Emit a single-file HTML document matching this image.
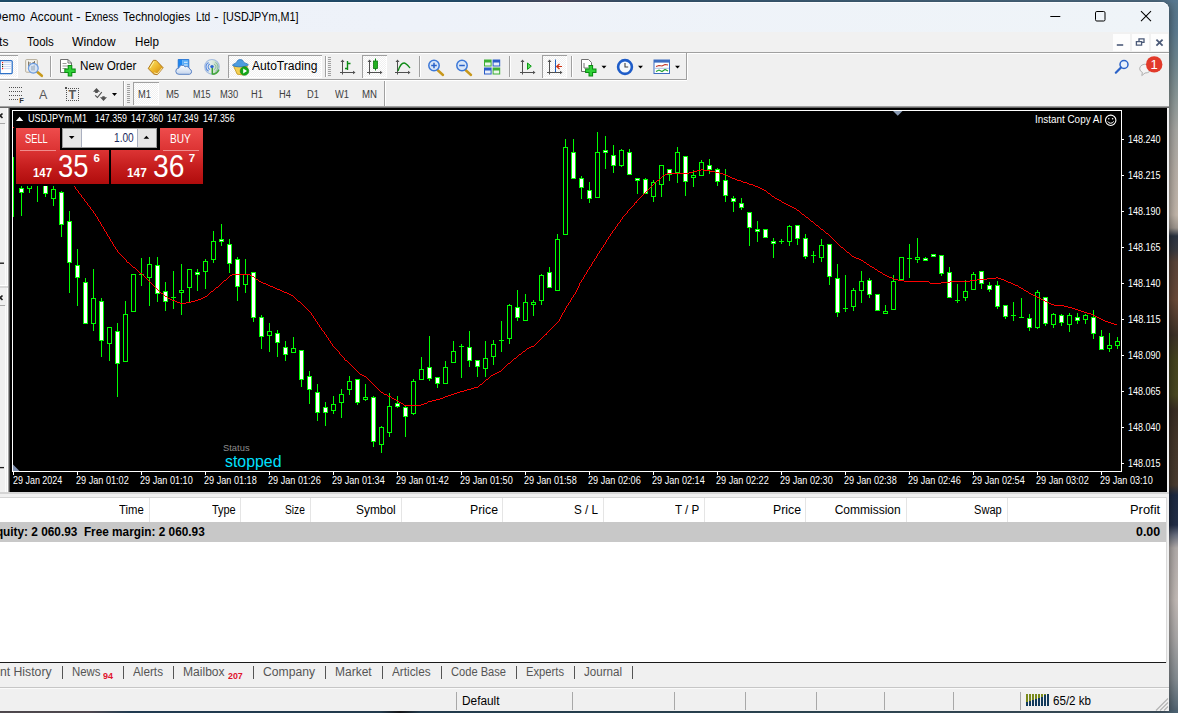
<!DOCTYPE html>
<html><head><meta charset="utf-8"><title>USDJPYm,M1</title>
<style>
html,body{margin:0;padding:0;}
body{width:1178px;height:713px;overflow:hidden;position:relative;font-family:"Liberation Sans",sans-serif;
background:linear-gradient(180deg,#58778c 0px,#5c7b90 30px,#6e8690 60px,#8a9898 95px,#a8a8a4 130px,#b8b0a8 170px,#c4b8ac 215px,#a09890 228px,#2c3442 236px,#3a3a40 250px,#5a4438 262px,#6a4a38 300px,#3e3228 335px,#46441f 360px,#4a4822 395px,#3a2e24 410px,#44362a 440px,#4a3c30 485px,#1e2a42 495px,#232f48 525px,#6a7080 535px,#b4aeac 548px,#c4bcb8 600px,#aaa8a8 640px,#848c92 680px,#5e6e7a 705px,#4e5e6c 713px);}
.r{position:absolute;}
.t{position:absolute;white-space:pre;transform-origin:0 50%;}
svg{position:absolute;overflow:visible;}
</style></head><body>
<div class="r" style="left:0;top:0;width:1178px;height:3px;background:linear-gradient(90deg,#235b7f 0,#2a5a7c 480px,#5c5870 560px,#3a607e 640px,#4a6c86 900px,#587890 1178px);"></div>
<div class="r" style="left:0;top:710px;width:1178px;height:3px;background:linear-gradient(90deg,#6a6268 0,#68606a 90px,#2c506c 130px,#2e5068 380px,#1c1c20 400px,#2e5068 420px,#3a5a6a 800px,#4e6474 1178px);"></div>
<div class="r" style="left:-30px;top:2px;width:1199px;height:709px;background:#f0f0f0;border-radius:8px 8px 0 0;box-shadow:0 1px 10px 1px rgba(0,0,0,.45);"></div>
<div class="r" style="left:0px;top:2px;width:1169px;height:29.5px;background:linear-gradient(90deg,#edf1f8 0,#eef2f9 400px,#eff4f8 100%);border-radius:0 8px 0 0;box-shadow:inset 0 1px 0 #fbfcfe;"></div>
<span class="t " style="left:-6.91px;top:8.80px;font-size:12px;line-height:16px;color:#000;">Demo</span>
<span class="t " style="left:29.60px;top:8.80px;font-size:12px;line-height:16px;color:#000;transform:scaleX(0.9779);">Account</span>
<span class="t " style="left:76.20px;top:8.80px;font-size:12px;line-height:16px;color:#000;transform:scaleX(1.1510);">-</span>
<span class="t " style="left:84.90px;top:8.80px;font-size:12px;line-height:16px;color:#000;transform:scaleX(0.8462);">Exness</span>
<span class="t " style="left:122.90px;top:8.80px;font-size:12px;line-height:16px;color:#000;transform:scaleX(0.9593);">Technologies</span>
<span class="t " style="left:195.50px;top:8.80px;font-size:12px;line-height:16px;color:#000;transform:scaleX(0.8572);">Ltd</span>
<span class="t " style="left:214.40px;top:8.80px;font-size:12px;line-height:16px;color:#000;transform:scaleX(1.1510);">-</span>
<span class="t " style="left:223.40px;top:8.80px;font-size:12px;line-height:16px;color:#000;transform:scaleX(0.8975);">[USDJPYm,M1]</span>
<svg width="1178" height="40" style="left:0;top:0"><g stroke="#000" stroke-width="1" fill="none"><path d="M1050.3 16.5H1060.3"/><rect x="1095.5" y="11.5" width="9.5" height="9.5" rx="1.3"/><path d="M1141 11.2L1151 21.2M1151 11.2L1141 21.2" stroke-width="1.05"/></g></svg>
<div class="r" style="left:0px;top:31.5px;width:1169px;height:20.5px;background:#f1f1f1;"></div>
<span class="t " style="left:-26.94px;top:33.50px;font-size:12px;line-height:16px;color:#000;">Charts</span>
<span class="t " style="left:27.20px;top:33.50px;font-size:12px;line-height:16px;color:#000;transform:scaleX(0.9567);">Tools</span>
<span class="t " style="left:72.40px;top:33.50px;font-size:12px;line-height:16px;color:#000;transform:scaleX(1.0192);">Window</span>
<span class="t " style="left:134.50px;top:33.50px;font-size:12px;line-height:16px;color:#000;transform:scaleX(0.9684);">Help</span>
<div class="r" style="left:1113px;top:34px;width:16.5px;height:16.5px;background:#fdfdfd;"></div>
<div class="r" style="left:1132px;top:34px;width:16.5px;height:16.5px;background:#fdfdfd;"></div>
<div class="r" style="left:1151px;top:34px;width:16.5px;height:16.5px;background:#fdfdfd;"></div>
<svg width="1178" height="60" style="left:0;top:0"><g stroke="#4b5a78" fill="none" stroke-width="1.6"><path d="M1116.8 45H1123.2"/><path d="M1136.4 41.6h5.2v3.6h-5.2zM1139 41.4v-2.6h5v3.6h-2.4" stroke-width="1.3"/><path d="M1156.4 39.6l6.2 6M1162.6 39.6l-6.2 6" stroke-width="1.8"/></g></svg>
<div class="r" style="left:0px;top:52px;width:1169px;height:1px;background:#a0a0a0;"></div>
<div class="r" style="left:0px;top:53px;width:1169px;height:1px;background:#ffffff;"></div>
<div class="r" style="left:0px;top:79px;width:687px;height:1px;background:#a0a0a0;"></div>
<div class="r" style="left:0px;top:80px;width:687px;height:1px;background:#ffffff;"></div>
<div class="r" style="left:686px;top:53px;width:1px;height:27px;background:#a0a0a0;"></div>
<div class="r" style="left:687px;top:53px;width:1px;height:27px;background:#ffffff;"></div>
<div class="r" style="left:384px;top:81px;width:1px;height:25px;background:#a0a0a0;"></div>
<div class="r" style="left:385px;top:81px;width:1px;height:25px;background:#ffffff;"></div>
<div class="r" style="left:0px;top:55px;width:18px;height:22.5px;background:repeating-conic-gradient(#ffffff 0 25%,#f0f0f0 0 50%) 0 0/2px 2px;box-shadow:inset 0 1px 0 #a0a0a0, inset -1px -1px 0 #ffffff;"></div>
<div class="r" style="left:228px;top:55px;width:94px;height:22.5px;background:repeating-conic-gradient(#ffffff 0 25%,#f0f0f0 0 50%) 0 0/2px 2px;box-shadow:inset 1px 1px 0 #a0a0a0, inset -1px -1px 0 #ffffff;"></div>
<div class="r" style="left:362px;top:55px;width:25px;height:22.5px;background:repeating-conic-gradient(#ffffff 0 25%,#f0f0f0 0 50%) 0 0/2px 2px;box-shadow:inset 1px 1px 0 #a0a0a0, inset -1px -1px 0 #ffffff;"></div>
<div class="r" style="left:542px;top:55px;width:25px;height:22.5px;background:repeating-conic-gradient(#ffffff 0 25%,#f0f0f0 0 50%) 0 0/2px 2px;box-shadow:inset 1px 1px 0 #a0a0a0, inset -1px -1px 0 #ffffff;"></div>
<div class="r" style="left:133px;top:82px;width:25.5px;height:22.5px;background:repeating-conic-gradient(#ffffff 0 25%,#f0f0f0 0 50%) 0 0/2px 2px;box-shadow:inset 1px 1px 0 #a0a0a0, inset -1px -1px 0 #ffffff;"></div>
<div class="r" style="left:50px;top:56px;width:1px;height:21px;background:#a0a0a0;"></div>
<div class="r" style="left:51px;top:56px;width:1px;height:21px;background:#ffffff;"></div>
<div class="r" style="left:325px;top:56px;width:1px;height:21px;background:#a0a0a0;"></div>
<div class="r" style="left:326px;top:56px;width:1px;height:21px;background:#ffffff;"></div>
<div class="r" style="left:419px;top:56px;width:1px;height:21px;background:#a0a0a0;"></div>
<div class="r" style="left:420px;top:56px;width:1px;height:21px;background:#ffffff;"></div>
<div class="r" style="left:509px;top:56px;width:1px;height:21px;background:#a0a0a0;"></div>
<div class="r" style="left:510px;top:56px;width:1px;height:21px;background:#ffffff;"></div>
<div class="r" style="left:571px;top:56px;width:1px;height:21px;background:#a0a0a0;"></div>
<div class="r" style="left:572px;top:56px;width:1px;height:21px;background:#ffffff;"></div>
<div class="r" style="left:123px;top:81px;width:1px;height:25px;background:#a0a0a0;"></div>
<div class="r" style="left:124px;top:81px;width:1px;height:25px;background:#ffffff;"></div>
<div class="r" style="left:328px;top:57px;width:3px;height:20px;background:repeating-linear-gradient(180deg,#a0a0a0 0,#a0a0a0 1px,#f0f0f0 1px,#f0f0f0 2px);"></div>
<div class="r" style="left:127px;top:84px;width:3px;height:20px;background:repeating-linear-gradient(180deg,#a0a0a0 0,#a0a0a0 1px,#f0f0f0 1px,#f0f0f0 2px);"></div>
<span class="t " style="left:79.50px;top:57.50px;font-size:12px;line-height:16px;color:#000;transform:scaleX(0.9739);">New Order</span>
<span class="t " style="left:252.00px;top:58.00px;font-size:12px;line-height:16px;color:#000;transform:scaleX(1.0072);">AutoTrading</span>
<svg width="1178" height="110" style="left:0;top:0"><rect x="-3" y="60.6" width="15.2" height="13" rx="1" fill="#fff" stroke="#2e72c8" stroke-width="1.3"/><rect x="-1" y="61" width="1.8" height="12.2" fill="#3c7cd0"/><g stroke="#c4d6f4" stroke-width="0.9"><path d="M4 62.6h7.4M4 64.6h7.4M4 66.6h7.4M4 68.6h7.4"/></g><g><rect x="2" y="62" width="1.2" height="1.2" fill="#f01818"/><rect x="2" y="64" width="1.2" height="1.2" fill="#203020"/><rect x="2" y="66" width="1.2" height="1.2" fill="#203020"/><rect x="2" y="68" width="1.2" height="1.2" fill="#f01818"/></g><rect x="25.7" y="59.6" width="11.6" height="12.6" rx=".8" fill="#f6f4ee" stroke="#b4ac98" stroke-width="1"/><path d="M28.5 61.5v6M28.5 63h2.5M34.5 61v6M32.5 62.500h2" stroke="#787060" stroke-width=".9" fill="none"/><path d="M37.4 72l4.400 3.800" stroke="#c89a1c" stroke-width="2.6" stroke-linecap="round"/><circle cx="33.3" cy="68.2" r="4.9" fill="#d4e2f4" fill-opacity=".9" stroke="#6c9ce0" stroke-width="1.2"/><path d="M32 66v4.400M34 65.600v5" stroke="#9cacbc" stroke-width="1.2"/><path d="M60.5 59.5h7.5l3.5 3.5v9.5h-11z" fill="#fff" stroke="#707070" stroke-width="1"/><path d="M68 59.5v3.5h3.5" fill="none" stroke="#707070" stroke-width="1"/><path d="M62.5 63.5h4M62.5 66h6M62.5 68.5h4" stroke="#909090" stroke-width="0.9"/><path d="M70 65v11.4M64.3 70.7h11.4" stroke="#0a8a12" stroke-width="4.6"/><path d="M70 66v9.4M65.3 70.7h9.4" stroke="#30d038" stroke-width="2.6"/><defs><linearGradient id="gb" x1="0" y1="0" x2="1" y2="1"><stop offset="0" stop-color="#fbe870"/><stop offset=".5" stop-color="#eeb82c"/><stop offset="1" stop-color="#c07c10"/></linearGradient><linearGradient id="gf" x1="0" y1="0" x2="0" y2="1"><stop offset="0" stop-color="#fff"/><stop offset="1" stop-color="#c4d4ec"/></linearGradient><linearGradient id="gs" x1="0" y1="0" x2="1" y2="0"><stop offset="0" stop-color="#e8f0fc"/><stop offset=".5" stop-color="#d0e4d8"/><stop offset="1" stop-color="#8cc87c"/></linearGradient></defs><path d="M148.2 68.6l5.2-8.3 2.8.1 7 7.4-6 6.9-3.4-.6z" fill="url(#gb)" stroke="#a86c10" stroke-width=".9" stroke-linejoin="round"/><path d="M154.2 72.8l3 1 5.2-6" fill="none" stroke="#fcefb4" stroke-width="1"/><path d="M150 68l4-6.4" fill="none" stroke="#fdf4a8" stroke-width="1"/><path d="M178.2 59.5h4.3v9h-4.3z" fill="#1c86f0"/><path d="M182.5 59.5h6.3v9.5h-6.3z" fill="#56acf8"/><path d="M178.2 59.5h10.6v9.5h-10.6z" fill="none" stroke="#1a6cd0" stroke-width=".8"/><path d="M184 62.3h3.6M184 65h3.6" stroke="#eaf4ff" stroke-width="1.1"/><path d="M179 74.3a3.1 3.1 0 0 1-.2-6.2 3.5 3.5 0 0 1 6.3-1.3 3.3 3.3 0 0 1 4.6 2.3 2.7 2.7 0 0 1-.2 5.2z" fill="url(#gf)" stroke="#5a82c4" stroke-width="1"/><circle cx="212" cy="66.8" r="7.3" fill="url(#gs)" fill-opacity=".55" stroke="#a4bce0" stroke-width="1.1"/><path d="M208.6 71.2a5 5 0 0 1 0-8.8M210 69.6a3 3 0 0 1 0-5.6" fill="none" stroke="#5c8ce0" stroke-width="1.1"/><path d="M215.4 71.2a5 5 0 0 0 0-8.8M214 69.6a3 3 0 0 0 0-5.6" fill="none" stroke="#8cb8a8" stroke-width="1"/><circle cx="212" cy="66.6" r="1.7" fill="#2a62d0"/><path d="M212.3 68v6.4" stroke="#38a030" stroke-width="1.5"/><path d="M212.3 74.2a7.4 7.4 0 0 0 6.6-4.6" fill="none" stroke="#48a840" stroke-width="1.6"/><path d="M233.6 66.2l3.6 8 6.4.8 3.8-8.6z" fill="#f4d054" stroke="#c09418" stroke-width=".8"/><path d="M232.4 65.2c2-2.2 4-1.6 4.600-3.800 1-2.400 5.400-2.400 6.400 0 .6 2.200 3.400 1.400 5 3.400-3.200 2.600-12.400 2.800-16 .4z" fill="#4c9ce0" stroke="#2c74b8" stroke-width=".8"/><circle cx="244.5" cy="71" r="4.3" fill="#14a818" stroke="#0c8010" stroke-width=".6"/><path d="M243.2 68.6v4.8l3.800-2.400z" fill="#fff"/><path d="M342.5 60v14.5M340 72.5h14" stroke="#505050" stroke-width="1" fill="none"/><path d="M340.5 62l2-2.5 2 2.5zM353 70.8l2.5 1.7-2.5 1.7z" fill="#505050"/><path d="M347.5 61v9M347.5 63.5h3M345 68.5h2.5" stroke="#0c8a14" stroke-width="1.4" fill="none"/><path d="M369.5 60v14.5M367 72.5h14" stroke="#505050" stroke-width="1" fill="none"/><path d="M367.5 62l2-2.5 2 2.5zM380 70.8l2.5 1.7-2.5 1.7z" fill="#505050"/><path d="M375.5 58.5v12" stroke="#0c8a14" stroke-width="1"/><rect x="373.5" y="61" width="4" height="7.5" fill="#22b020" stroke="#0c7a10" stroke-width=".8"/><path d="M397.5 60v14.5M395 72.5h14" stroke="#505050" stroke-width="1" fill="none"/><path d="M395.5 62l2-2.5 2 2.5zM408 70.8l2.5 1.7-2.5 1.7z" fill="#505050"/><path d="M398 71c2-6 4-8 6-8s3.5 2 6 5" stroke="#0c8a14" stroke-width="1.3" fill="none"/><path d="M437.5 70.0l5.5 5" stroke="#c8981c" stroke-width="2.4" stroke-linecap="round"/><circle cx="434" cy="65.5" r="5.2" fill="#d8e6f8" stroke="#3c78d8" stroke-width="1.5"/><path d="M431.2 65.5h5.6" stroke="#2a62c8" stroke-width="1.5"/><path d="M434 62.7v5.6" stroke="#2a62c8" stroke-width="1.5"/><path d="M465.5 70.0l5.5 5" stroke="#c8981c" stroke-width="2.4" stroke-linecap="round"/><circle cx="462" cy="65.5" r="5.2" fill="#d8e6f8" stroke="#3c78d8" stroke-width="1.5"/><path d="M459.2 65.5h5.6" stroke="#2a62c8" stroke-width="1.5"/><rect x="484" y="59.5" width="7.6" height="7" fill="#3cb034"/><rect x="492.6" y="59.5" width="7.6" height="7" fill="#2a5cc8"/><rect x="484" y="67.5" width="7.6" height="7" fill="#2a5cc8"/><rect x="492.6" y="67.5" width="7.6" height="7" fill="#3cb034"/><g fill="#fff" fill-opacity=".9"><rect x="485" y="62.5" width="5.6" height="3"/><rect x="493.6" y="62.5" width="5.6" height="3"/><rect x="485" y="70.5" width="5.6" height="3"/><rect x="493.6" y="70.5" width="5.6" height="3"/></g><path d="M522.5 60v14.5M520 72.5h14" stroke="#505050" stroke-width="1" fill="none"/><path d="M520.5 62l2-2.5 2 2.5zM533 70.8l2.5 1.7-2.5 1.7z" fill="#505050"/><path d="M527.5 63v6.4l3.8-3.2z" fill="#60e060" stroke="#0c9a14" stroke-width="1"/><path d="M549.5 60v14.5M547 72.5h14" stroke="#505050" stroke-width="1" fill="none"/><path d="M547.5 62l2-2.5 2 2.5zM560 70.8l2.5 1.7-2.5 1.7z" fill="#505050"/><path d="M555.5 59.5v12.5" stroke="#2060c0" stroke-width="1"/><path d="M562 66.5h-5M559.5 64l-2.8 2.5 2.8 2.5" stroke="#d03010" stroke-width="1.2" fill="none"/><path d="M581.5 59.5h7l3 3v9h-10z" fill="#fff" stroke="#707070" stroke-width="1"/><path d="M584 63v5h4" stroke="#707070" stroke-width="1" fill="none"/><path d="M590.8 65v11.4M585.1 70.7h11.4" stroke="#0a8a12" stroke-width="4.6"/><path d="M590.8 66v9.4M586.1 70.7h9.4" stroke="#30d038" stroke-width="2.6"/><path d="M601.5 65.8h5l-2.5 2.8z" fill="#000"/><path d="M638.0 65.8h5l-2.5 2.8z" fill="#000"/><path d="M675.0 65.8h5l-2.5 2.8z" fill="#000"/><circle cx="625" cy="67" r="6.9" fill="#f4f8fc" stroke="#1e5cc8" stroke-width="2.6"/><path d="M625 63v4h3.2" stroke="#404040" stroke-width="1.1" fill="none"/><rect x="654" y="60" width="15.5" height="13.5" fill="#fff" stroke="#3c6cc0" stroke-width="1"/><rect x="654" y="60" width="15.5" height="2.6" fill="#3c6cc0"/><path d="M656 66.5l3-1 3 .5 3-1.5 3 .5" stroke="#c03020" stroke-width="1.1" fill="none"/><path d="M656 71.5l3-1.5 3 1.5 3-2 3 1.5" stroke="#20a030" stroke-width="1.1" fill="none"/><path d="M654.5 68.3h14.5" stroke="#9ab0d8" stroke-width=".8"/><circle cx="1124" cy="64.5" r="4" fill="#e8f0fc" stroke="#2a62c8" stroke-width="1.5"/><path d="M1121 67.5l-5.2 5.2" stroke="#2a62c8" stroke-width="2.2" stroke-linecap="round"/><path d="M1140 70a5.6 4.4 0 1 1 5 3l-3.2 2.6.6-3.2a5 4 0 0 1-2.4-2.4z" fill="#f4f4f4" stroke="#b0b0b0" stroke-width="1"/><circle cx="1154.2" cy="64.4" r="8.2" fill="#e23a2a"/><g stroke="#505050" stroke-width="1" stroke-dasharray="1 1"><path d="M9 87.5h14M9 91.5h14M9 95.5h14M9 99.5h9"/></g><g fill="#505050" shape-rendering="crispEdges"><rect x="66" y="88" width="1" height="1"/><rect x="66" y="100" width="1" height="1"/><rect x="68" y="88" width="1" height="1"/><rect x="68" y="100" width="1" height="1"/><rect x="70" y="88" width="1" height="1"/><rect x="70" y="100" width="1" height="1"/><rect x="72" y="88" width="1" height="1"/><rect x="72" y="100" width="1" height="1"/><rect x="74" y="88" width="1" height="1"/><rect x="74" y="100" width="1" height="1"/><rect x="76" y="88" width="1" height="1"/><rect x="76" y="100" width="1" height="1"/><rect x="78" y="88" width="1" height="1"/><rect x="78" y="100" width="1" height="1"/><rect x="66" y="90" width="1" height="1"/><rect x="78" y="90" width="1" height="1"/><rect x="66" y="92" width="1" height="1"/><rect x="78" y="92" width="1" height="1"/><rect x="66" y="94" width="1" height="1"/><rect x="78" y="94" width="1" height="1"/><rect x="66" y="96" width="1" height="1"/><rect x="78" y="96" width="1" height="1"/><rect x="66" y="98" width="1" height="1"/><rect x="78" y="98" width="1" height="1"/><rect x="65" y="87" width="2" height="2"/></g><path d="M96.5 88l3.5 3.8h-2.2v1.2h-2.6v-1.2h-2.2z" fill="#505050"/><path d="M103.5 100.9l3.5-3.7h-2.3v-1h-2.4v1h-2.3z" fill="#505050"/><path d="M95.2 95.3l2.2 2.2 4.4-5.3" stroke="#505050" stroke-width="1.1" fill="none"/><path d="M112.0 93.1h5l-2.5 2.8z" fill="#000"/></svg>
<span class="t " style="left:1150.60px;top:55.70px;font-size:13px;line-height:17px;color:#fff;">1</span>
<span class="t " style="left:19.20px;top:95.60px;font-size:7.5px;line-height:10px;color:#303030;font-weight:bold;">F</span>
<span class="t " style="left:39.30px;top:85.60px;font-size:13.5px;line-height:18px;color:#585858;transform:scaleX(0.9217);">A</span>
<span class="t " style="left:68.40px;top:86.60px;font-size:12.5px;line-height:16px;color:#585858;font-weight:bold;">T</span>
<span class="t " style="left:138.30px;top:88.00px;font-size:10px;line-height:13px;color:#404040;transform:scaleX(0.9358);">M1</span>
<span class="t " style="left:166.30px;top:88.00px;font-size:10px;line-height:13px;color:#404040;transform:scaleX(0.9430);">M5</span>
<span class="t " style="left:192.60px;top:88.00px;font-size:10px;line-height:13px;color:#404040;transform:scaleX(0.8944);">M15</span>
<span class="t " style="left:220.30px;top:88.00px;font-size:10px;line-height:13px;color:#404040;transform:scaleX(0.9355);">M30</span>
<span class="t " style="left:251.20px;top:88.00px;font-size:10px;line-height:13px;color:#404040;transform:scaleX(0.9231);">H1</span>
<span class="t " style="left:278.90px;top:88.00px;font-size:10px;line-height:13px;color:#404040;transform:scaleX(0.9309);">H4</span>
<span class="t " style="left:307.20px;top:88.00px;font-size:10px;line-height:13px;color:#404040;transform:scaleX(0.9309);">D1</span>
<span class="t " style="left:334.50px;top:88.00px;font-size:10px;line-height:13px;color:#404040;transform:scaleX(0.9333);">W1</span>
<span class="t " style="left:361.50px;top:88.00px;font-size:10px;line-height:13px;color:#404040;transform:scaleX(0.9645);">MN</span>
<div class="r" style="left:0px;top:106px;width:1169px;height:1px;background:#a0a0a0;"></div>
<div class="r" style="left:0px;top:107px;width:1169px;height:1px;background:#696969;"></div>
<div class="r" style="left:0px;top:108px;width:10px;height:384px;background:#f0f0f0;"></div>
<div class="r" style="left:7px;top:108px;width:1px;height:384px;background:#ffffff;"></div>
<div class="r" style="left:8px;top:108px;width:1px;height:384px;background:#a0a0a0;"></div>
<div class="r" style="left:9px;top:108px;width:1px;height:384px;background:#505050;"></div>
<div class="r" style="left:10px;top:108px;width:1158px;height:384px;background:#000000;"></div>
<div class="r" style="left:1167px;top:108px;width:2px;height:384px;background:#f0f0f0;"></div>
<svg width="12" height="400" style="left:0;top:100"><g stroke="#202020" stroke-width="1.6" fill="none"><path d="M-2 13.5l4.5 4.5M2.5 13.5l-4.5 4.5"/><path d="M-2 195.5l4.5 4.5M2.5 195.5l-4.5 4.5"/></g><path d="M0 185.5h7" stroke="#ffffff"/><path d="M0 186.5h8M0 187.5h8" stroke="#d8d8d8"/><path d="M0 163.2h4" stroke="#202020" stroke-width="1.4"/><path d="M0 367.6h4" stroke="#202020" stroke-width="1.3"/><path d="M0 23.5h5M0 205.5h5" stroke="#a8a8a8"/><path d="M5.5 24v161M5.5 206v186" stroke="#fbfbfb"/></svg>
<svg width="1178" height="713" style="left:0;top:0" shape-rendering="crispEdges"><g fill="#ffffff"><rect x="12" y="110" width="1110" height="1"/><rect x="12" y="110" width="1" height="362"/><rect x="1121" y="110" width="1" height="362"/><rect x="12" y="471" width="1110" height="1"/></g><rect x="13" y="157" width="1" height="60" fill="#00ff00"/><g fill="#00ff00"><rect x="21" y="186" width="1" height="30"/><rect x="29" y="180" width="1" height="13"/><rect x="37" y="180" width="1" height="22"/><rect x="45" y="180" width="1" height="17"/><rect x="53" y="186" width="1" height="20"/><rect x="61" y="191" width="1" height="46"/><rect x="69" y="211" width="1" height="82"/><rect x="77" y="249" width="1" height="57"/><rect x="85" y="278" width="1" height="46"/><rect x="93" y="269" width="1" height="62"/><rect x="101" y="298" width="1" height="59"/><rect x="109" y="327" width="1" height="34"/><rect x="117" y="323" width="1" height="74"/><rect x="125" y="301" width="1" height="61"/><rect x="133" y="274" width="1" height="38"/><rect x="141" y="258" width="1" height="28"/><rect x="149" y="257" width="1" height="49"/><rect x="157" y="257" width="1" height="45"/><rect x="165" y="282" width="1" height="29"/><rect x="173" y="271" width="1" height="38"/><rect x="181" y="264" width="1" height="51"/><rect x="189" y="269" width="1" height="33"/><rect x="197" y="269" width="1" height="22"/><rect x="205" y="259" width="1" height="30"/><rect x="213" y="231" width="1" height="32"/><rect x="221" y="224" width="1" height="22"/><rect x="229" y="239" width="1" height="34"/><rect x="237" y="257" width="1" height="44"/><rect x="245" y="259" width="1" height="34"/><rect x="253" y="272" width="1" height="50"/><rect x="261" y="315" width="1" height="34"/><rect x="269" y="323" width="1" height="29"/><rect x="277" y="330" width="1" height="27"/><rect x="285" y="341" width="1" height="20"/><rect x="293" y="337" width="1" height="16"/><rect x="301" y="350" width="1" height="37"/><rect x="309" y="371" width="1" height="33"/><rect x="317" y="384" width="1" height="37"/><rect x="325" y="402" width="1" height="24"/><rect x="333" y="396" width="1" height="18"/><rect x="341" y="389" width="1" height="29"/><rect x="349" y="376" width="1" height="19"/><rect x="357" y="379" width="1" height="26"/><rect x="365" y="384" width="1" height="17"/><rect x="373" y="396" width="1" height="51"/><rect x="381" y="426" width="1" height="27"/><rect x="389" y="393" width="1" height="44"/><rect x="397" y="396" width="1" height="12"/><rect x="405" y="405" width="1" height="32"/><rect x="413" y="379" width="1" height="36"/><rect x="421" y="357" width="1" height="23"/><rect x="429" y="336" width="1" height="45"/><rect x="437" y="377" width="1" height="11"/><rect x="445" y="361" width="1" height="23"/><rect x="453" y="341" width="1" height="22"/><rect x="461" y="344" width="1" height="34"/><rect x="469" y="331" width="1" height="36"/><rect x="477" y="360" width="1" height="17"/><rect x="485" y="341" width="1" height="36"/><rect x="493" y="340" width="1" height="25"/><rect x="501" y="321" width="1" height="31"/><rect x="509" y="304" width="1" height="40"/><rect x="517" y="290" width="1" height="31"/><rect x="525" y="294" width="1" height="27"/><rect x="533" y="300" width="1" height="16"/><rect x="541" y="274" width="1" height="31"/><rect x="549" y="267" width="1" height="21"/><rect x="557" y="234" width="1" height="57"/><rect x="565" y="139" width="1" height="96"/><rect x="573" y="139" width="1" height="40"/><rect x="581" y="176" width="1" height="23"/><rect x="589" y="182" width="1" height="21"/><rect x="597" y="132" width="1" height="66"/><rect x="605" y="136" width="1" height="33"/><rect x="613" y="145" width="1" height="28"/><rect x="621" y="149" width="1" height="18"/><rect x="629" y="149" width="1" height="26"/><rect x="637" y="178" width="1" height="16"/><rect x="645" y="178" width="1" height="16"/><rect x="653" y="180" width="1" height="22"/><rect x="661" y="165" width="1" height="32"/><rect x="669" y="169" width="1" height="12"/><rect x="677" y="147" width="1" height="36"/><rect x="685" y="156" width="1" height="40"/><rect x="693" y="170" width="1" height="17"/><rect x="701" y="160" width="1" height="16"/><rect x="709" y="159" width="1" height="15"/><rect x="717" y="168" width="1" height="18"/><rect x="725" y="169" width="1" height="33"/><rect x="733" y="196" width="1" height="16"/><rect x="741" y="198" width="1" height="12"/><rect x="749" y="212" width="1" height="34"/><rect x="757" y="221" width="1" height="21"/><rect x="765" y="229" width="1" height="9"/><rect x="773" y="238" width="1" height="20"/><rect x="781" y="239" width="1" height="5"/><rect x="789" y="225" width="1" height="21"/><rect x="797" y="225" width="1" height="20"/><rect x="805" y="234" width="1" height="25"/><rect x="813" y="251" width="1" height="12"/><rect x="821" y="239" width="1" height="23"/><rect x="829" y="244" width="1" height="41"/><rect x="837" y="264" width="1" height="53"/><rect x="845" y="275" width="1" height="37"/><rect x="853" y="288" width="1" height="23"/><rect x="861" y="271" width="1" height="32"/><rect x="869" y="278" width="1" height="20"/><rect x="877" y="294" width="1" height="17"/><rect x="885" y="305" width="1" height="8"/><rect x="893" y="275" width="1" height="35"/><rect x="901" y="257" width="1" height="24"/><rect x="909" y="244" width="1" height="34"/><rect x="917" y="238" width="1" height="25"/><rect x="925" y="257" width="1" height="3"/><rect x="933" y="254" width="1" height="3"/><rect x="941" y="255" width="1" height="21"/><rect x="949" y="267" width="1" height="31"/><rect x="957" y="284" width="1" height="19"/><rect x="965" y="280" width="1" height="21"/><rect x="973" y="272" width="1" height="18"/><rect x="981" y="271" width="1" height="18"/><rect x="989" y="282" width="1" height="10"/><rect x="997" y="281" width="1" height="28"/><rect x="1005" y="305" width="1" height="14"/><rect x="1013" y="302" width="1" height="19"/><rect x="1021" y="298" width="1" height="20"/><rect x="1029" y="314" width="1" height="17"/><rect x="1037" y="290" width="1" height="39"/><rect x="1045" y="297" width="1" height="29"/><rect x="1053" y="313" width="1" height="15"/><rect x="1061" y="314" width="1" height="12"/><rect x="1069" y="313" width="1" height="19"/><rect x="1077" y="313" width="1" height="11"/><rect x="1085" y="314" width="1" height="10"/><rect x="1093" y="310" width="1" height="29"/><rect x="1101" y="330" width="1" height="20"/><rect x="1109" y="333" width="1" height="19"/><rect x="1117" y="337" width="1" height="12"/><rect x="19" y="188" width="5" height="5"/><rect x="27" y="180" width="5" height="9"/><rect x="43" y="180" width="5" height="14"/><rect x="51" y="189" width="5" height="10"/><rect x="59" y="192" width="5" height="33"/><rect x="67" y="221" width="5" height="42"/><rect x="75" y="265" width="5" height="13"/><rect x="83" y="282" width="5" height="42"/><rect x="91" y="298" width="5" height="26"/><rect x="99" y="301" width="5" height="40"/><rect x="107" y="327" width="5" height="17"/><rect x="115" y="331" width="5" height="33"/><rect x="123" y="314" width="5" height="48"/><rect x="131" y="274" width="5" height="38"/><rect x="139" y="274" width="5" height="1"/><rect x="147" y="264" width="5" height="14"/><rect x="155" y="265" width="5" height="29"/><rect x="163" y="291" width="5" height="11"/><rect x="171" y="297" width="5" height="1"/><rect x="179" y="290" width="5" height="3"/><rect x="187" y="269" width="5" height="19"/><rect x="195" y="272" width="5" height="3"/><rect x="203" y="261" width="5" height="11"/><rect x="211" y="241" width="5" height="19"/><rect x="219" y="239" width="5" height="3"/><rect x="227" y="244" width="5" height="20"/><rect x="235" y="259" width="5" height="28"/><rect x="243" y="274" width="5" height="11"/><rect x="251" y="272" width="5" height="46"/><rect x="259" y="317" width="5" height="20"/><rect x="267" y="331" width="5" height="5"/><rect x="275" y="333" width="5" height="10"/><rect x="283" y="347" width="5" height="8"/><rect x="291" y="348" width="5" height="5"/><rect x="299" y="350" width="5" height="30"/><rect x="307" y="376" width="5" height="14"/><rect x="315" y="392" width="5" height="21"/><rect x="323" y="407" width="5" height="6"/><rect x="331" y="404" width="5" height="7"/><rect x="339" y="394" width="5" height="9"/><rect x="347" y="381" width="5" height="9"/><rect x="355" y="379" width="5" height="24"/><rect x="363" y="397" width="5" height="3"/><rect x="371" y="397" width="5" height="45"/><rect x="379" y="427" width="5" height="18"/><rect x="387" y="406" width="5" height="27"/><rect x="395" y="403" width="5" height="4"/><rect x="403" y="407" width="5" height="10"/><rect x="411" y="381" width="5" height="33"/><rect x="419" y="369" width="5" height="11"/><rect x="427" y="367" width="5" height="12"/><rect x="435" y="377" width="5" height="7"/><rect x="443" y="367" width="5" height="17"/><rect x="451" y="351" width="5" height="12"/><rect x="459" y="346" width="5" height="1"/><rect x="467" y="347" width="5" height="14"/><rect x="475" y="360" width="5" height="7"/><rect x="483" y="358" width="5" height="11"/><rect x="491" y="344" width="5" height="13"/><rect x="499" y="340" width="5" height="1"/><rect x="507" y="305" width="5" height="34"/><rect x="515" y="307" width="5" height="11"/><rect x="523" y="302" width="5" height="19"/><rect x="531" y="302" width="5" height="3"/><rect x="539" y="275" width="5" height="26"/><rect x="547" y="272" width="5" height="16"/><rect x="555" y="239" width="5" height="52"/><rect x="563" y="147" width="5" height="88"/><rect x="571" y="152" width="5" height="27"/><rect x="579" y="178" width="5" height="10"/><rect x="587" y="190" width="5" height="9"/><rect x="595" y="152" width="5" height="46"/><rect x="603" y="150" width="5" height="3"/><rect x="611" y="155" width="5" height="11"/><rect x="619" y="150" width="5" height="16"/><rect x="627" y="152" width="5" height="23"/><rect x="635" y="178" width="5" height="3"/><rect x="643" y="179" width="5" height="15"/><rect x="651" y="182" width="5" height="15"/><rect x="659" y="165" width="5" height="20"/><rect x="667" y="169" width="5" height="6"/><rect x="675" y="152" width="5" height="21"/><rect x="683" y="156" width="5" height="26"/><rect x="691" y="175" width="5" height="3"/><rect x="699" y="162" width="5" height="14"/><rect x="707" y="165" width="5" height="5"/><rect x="715" y="169" width="5" height="13"/><rect x="723" y="180" width="5" height="16"/><rect x="731" y="198" width="5" height="4"/><rect x="739" y="203" width="5" height="5"/><rect x="747" y="212" width="5" height="16"/><rect x="755" y="229" width="5" height="3"/><rect x="763" y="229" width="5" height="9"/><rect x="771" y="241" width="5" height="3"/><rect x="779" y="241" width="5" height="1"/><rect x="787" y="226" width="5" height="16"/><rect x="795" y="225" width="5" height="14"/><rect x="803" y="238" width="5" height="19"/><rect x="811" y="255" width="5" height="1"/><rect x="819" y="245" width="5" height="13"/><rect x="827" y="244" width="5" height="33"/><rect x="835" y="278" width="5" height="35"/><rect x="843" y="308" width="5" height="1"/><rect x="851" y="290" width="5" height="17"/><rect x="859" y="281" width="5" height="10"/><rect x="867" y="280" width="5" height="15"/><rect x="875" y="294" width="5" height="17"/><rect x="883" y="311" width="5" height="3"/><rect x="891" y="281" width="5" height="29"/><rect x="899" y="257" width="5" height="23"/><rect x="907" y="258" width="5" height="1"/><rect x="915" y="257" width="5" height="3"/><rect x="923" y="258" width="5" height="3"/><rect x="931" y="254" width="5" height="3"/><rect x="939" y="255" width="5" height="19"/><rect x="947" y="272" width="5" height="26"/><rect x="955" y="300" width="5" height="1"/><rect x="963" y="291" width="5" height="7"/><rect x="971" y="274" width="5" height="16"/><rect x="979" y="271" width="5" height="13"/><rect x="987" y="285" width="5" height="5"/><rect x="995" y="285" width="5" height="22"/><rect x="1003" y="305" width="5" height="12"/><rect x="1011" y="315" width="5" height="1"/><rect x="1019" y="317" width="5" height="1"/><rect x="1027" y="318" width="5" height="10"/><rect x="1035" y="292" width="5" height="36"/><rect x="1043" y="297" width="5" height="27"/><rect x="1051" y="314" width="5" height="11"/><rect x="1059" y="315" width="5" height="8"/><rect x="1067" y="315" width="5" height="10"/><rect x="1075" y="317" width="5" height="4"/><rect x="1083" y="315" width="5" height="5"/><rect x="1091" y="317" width="5" height="17"/><rect x="1099" y="336" width="5" height="14"/><rect x="1107" y="345" width="5" height="4"/><rect x="1115" y="341" width="5" height="5"/></g><g fill="#ffffff"><rect x="20" y="189" width="3" height="3"/><rect x="44" y="181" width="3" height="12"/><rect x="60" y="193" width="3" height="31"/><rect x="68" y="222" width="3" height="40"/><rect x="76" y="266" width="3" height="11"/><rect x="84" y="283" width="3" height="40"/><rect x="100" y="302" width="3" height="38"/><rect x="116" y="332" width="3" height="31"/><rect x="156" y="266" width="3" height="27"/><rect x="164" y="292" width="3" height="9"/><rect x="196" y="273" width="3" height="1"/><rect x="220" y="240" width="3" height="1"/><rect x="228" y="245" width="3" height="18"/><rect x="236" y="260" width="3" height="26"/><rect x="252" y="273" width="3" height="44"/><rect x="260" y="318" width="3" height="18"/><rect x="276" y="334" width="3" height="8"/><rect x="284" y="348" width="3" height="6"/><rect x="300" y="351" width="3" height="28"/><rect x="308" y="377" width="3" height="12"/><rect x="316" y="393" width="3" height="19"/><rect x="324" y="408" width="3" height="4"/><rect x="356" y="380" width="3" height="22"/><rect x="372" y="398" width="3" height="43"/><rect x="396" y="404" width="3" height="2"/><rect x="404" y="408" width="3" height="8"/><rect x="428" y="368" width="3" height="10"/><rect x="436" y="378" width="3" height="5"/><rect x="468" y="348" width="3" height="12"/><rect x="476" y="361" width="3" height="5"/><rect x="516" y="308" width="3" height="9"/><rect x="548" y="273" width="3" height="14"/><rect x="572" y="153" width="3" height="25"/><rect x="580" y="179" width="3" height="8"/><rect x="588" y="191" width="3" height="7"/><rect x="604" y="151" width="3" height="1"/><rect x="612" y="156" width="3" height="9"/><rect x="628" y="153" width="3" height="21"/><rect x="636" y="179" width="3" height="1"/><rect x="644" y="180" width="3" height="13"/><rect x="668" y="170" width="3" height="4"/><rect x="684" y="157" width="3" height="24"/><rect x="708" y="166" width="3" height="3"/><rect x="716" y="170" width="3" height="11"/><rect x="724" y="181" width="3" height="14"/><rect x="732" y="199" width="3" height="2"/><rect x="740" y="204" width="3" height="3"/><rect x="748" y="213" width="3" height="14"/><rect x="756" y="230" width="3" height="1"/><rect x="764" y="230" width="3" height="7"/><rect x="772" y="242" width="3" height="1"/><rect x="796" y="226" width="3" height="12"/><rect x="804" y="239" width="3" height="17"/><rect x="828" y="245" width="3" height="31"/><rect x="836" y="279" width="3" height="33"/><rect x="868" y="281" width="3" height="13"/><rect x="876" y="295" width="3" height="15"/><rect x="924" y="259" width="3" height="1"/><rect x="932" y="255" width="3" height="1"/><rect x="940" y="256" width="3" height="17"/><rect x="948" y="273" width="3" height="24"/><rect x="980" y="272" width="3" height="11"/><rect x="988" y="286" width="3" height="3"/><rect x="996" y="286" width="3" height="20"/><rect x="1004" y="306" width="3" height="10"/><rect x="1028" y="319" width="3" height="8"/><rect x="1044" y="298" width="3" height="25"/><rect x="1060" y="316" width="3" height="6"/><rect x="1076" y="318" width="3" height="2"/><rect x="1092" y="318" width="3" height="15"/><rect x="1100" y="337" width="3" height="12"/></g><g fill="#000000"><rect x="28" y="181" width="3" height="7"/><rect x="52" y="190" width="3" height="8"/><rect x="92" y="299" width="3" height="24"/><rect x="108" y="328" width="3" height="15"/><rect x="124" y="315" width="3" height="46"/><rect x="132" y="275" width="3" height="36"/><rect x="148" y="265" width="3" height="12"/><rect x="180" y="291" width="3" height="1"/><rect x="188" y="270" width="3" height="17"/><rect x="204" y="262" width="3" height="9"/><rect x="212" y="242" width="3" height="17"/><rect x="244" y="275" width="3" height="9"/><rect x="268" y="332" width="3" height="3"/><rect x="292" y="349" width="3" height="3"/><rect x="332" y="405" width="3" height="5"/><rect x="340" y="395" width="3" height="7"/><rect x="348" y="382" width="3" height="7"/><rect x="364" y="398" width="3" height="1"/><rect x="380" y="428" width="3" height="16"/><rect x="388" y="407" width="3" height="25"/><rect x="412" y="382" width="3" height="31"/><rect x="420" y="370" width="3" height="9"/><rect x="444" y="368" width="3" height="15"/><rect x="452" y="352" width="3" height="10"/><rect x="484" y="359" width="3" height="9"/><rect x="492" y="345" width="3" height="11"/><rect x="508" y="306" width="3" height="32"/><rect x="524" y="303" width="3" height="17"/><rect x="532" y="303" width="3" height="1"/><rect x="540" y="276" width="3" height="24"/><rect x="556" y="240" width="3" height="50"/><rect x="564" y="148" width="3" height="86"/><rect x="596" y="153" width="3" height="44"/><rect x="620" y="151" width="3" height="14"/><rect x="652" y="183" width="3" height="13"/><rect x="660" y="166" width="3" height="18"/><rect x="676" y="153" width="3" height="19"/><rect x="692" y="176" width="3" height="1"/><rect x="700" y="163" width="3" height="12"/><rect x="788" y="227" width="3" height="14"/><rect x="820" y="246" width="3" height="11"/><rect x="852" y="291" width="3" height="15"/><rect x="860" y="282" width="3" height="8"/><rect x="884" y="312" width="3" height="1"/><rect x="892" y="282" width="3" height="27"/><rect x="900" y="258" width="3" height="21"/><rect x="916" y="258" width="3" height="1"/><rect x="964" y="292" width="3" height="5"/><rect x="972" y="275" width="3" height="14"/><rect x="1036" y="293" width="3" height="34"/><rect x="1052" y="315" width="3" height="9"/><rect x="1068" y="316" width="3" height="8"/><rect x="1084" y="316" width="3" height="3"/><rect x="1108" y="346" width="3" height="2"/><rect x="1116" y="342" width="3" height="3"/></g><path fill="#ff0000" d="M13 127h1v1h-1zM14 128h1v1h-1zM15 129h1v1h-1zM16 130h1v1h-1zM17 131h1v1h-1zM18 132h1v1h-1zM19 133h1v1h-1zM20 134h1v1h-1zM21 135h1v1h-1zM22 136h1v1h-1zM23 137h1v1h-1zM24 138h1v1h-1zM25 139h1v1h-1zM26 140h1v1h-1zM27 141h1v1h-1zM28 142h1v1h-1zM29 142h1v1h-1zM30 143h1v1h-1zM31 144h1v1h-1zM32 145h1v1h-1zM33 146h1v1h-1zM34 147h1v1h-1zM35 148h1v1h-1zM36 149h1v1h-1zM37 150h1v1h-1zM38 151h1v1h-1zM39 152h1v1h-1zM40 153h1v1h-1zM41 154h1v1h-1zM42 155h1v1h-1zM43 156h1v1h-1zM44 157h1v1h-1zM45 158h1v1h-1zM46 159h1v1h-1zM47 160h1v1h-1zM48 161h1v1h-1zM49 162h1v1h-1zM50 163h1v1h-1zM51 164h1v1h-1zM52 165h1v1h-1zM53 166h1v1h-1zM54 167h1v1h-1zM55 168h1v1h-1zM56 169h1v1h-1zM57 170h1v1h-1zM58 171h1v1h-1zM59 171h1v1h-1zM60 172h1v1h-1zM61 173h1v1h-1zM62 174h1v1h-1zM63 175h1v1h-1zM64 176h1v1h-1zM65 177h1v1h-1zM66 178h1v1h-1zM67 179h1v1h-1zM68 180h1v1h-1zM69 181h1v1h-1zM70 182h1v1h-1zM71 183h1v1h-1zM72 184h1v1h-1zM73 185h1v1h-1zM74 186h1v1h-1zM75 187h1v2h-1zM76 189h1v1h-1zM77 190h1v1h-1zM78 191h1v2h-1zM79 193h1v1h-1zM80 194h1v1h-1zM81 195h1v2h-1zM82 197h1v1h-1zM83 198h1v1h-1zM84 199h1v2h-1zM85 201h1v1h-1zM86 202h1v1h-1zM87 203h1v2h-1zM88 205h1v1h-1zM89 206h1v1h-1zM90 207h1v2h-1zM91 209h1v1h-1zM92 210h1v1h-1zM93 211h1v2h-1zM94 213h1v1h-1zM95 214h1v2h-1zM96 216h1v1h-1zM97 217h1v2h-1zM98 219h1v2h-1zM99 221h1v1h-1zM100 222h1v2h-1zM101 224h1v2h-1zM102 226h1v1h-1zM103 227h1v2h-1zM104 229h1v2h-1zM105 231h1v1h-1zM106 232h1v2h-1zM107 234h1v2h-1zM108 236h1v1h-1zM109 237h1v2h-1zM110 239h1v2h-1zM111 241h1v1h-1zM112 242h1v2h-1zM113 244h1v2h-1zM114 246h1v1h-1zM115 247h1v2h-1zM116 249h1v1h-1zM117 250h1v2h-1zM118 252h1v1h-1zM119 253h1v1h-1zM120 254h1v1h-1zM121 255h1v1h-1zM122 256h1v1h-1zM123 257h1v1h-1zM124 258h1v1h-1zM125 259h1v1h-1zM126 260h1v2h-1zM127 262h1v1h-1zM128 262h1v1h-1zM129 263h1v1h-1zM130 264h1v1h-1zM131 265h1v1h-1zM132 266h1v1h-1zM133 267h1v1h-1zM134 267h1v1h-1zM135 268h1v1h-1zM136 269h1v1h-1zM137 270h1v1h-1zM138 271h1v1h-1zM139 272h1v1h-1zM140 273h1v1h-1zM141 273h1v1h-1zM142 274h1v1h-1zM143 275h1v1h-1zM144 276h1v1h-1zM145 277h1v1h-1zM146 278h1v1h-1zM147 279h1v1h-1zM148 280h1v1h-1zM149 281h1v1h-1zM150 282h1v1h-1zM151 283h1v1h-1zM152 284h1v1h-1zM153 285h1v1h-1zM154 286h1v1h-1zM155 287h1v1h-1zM156 288h1v1h-1zM157 289h1v1h-1zM158 290h1v1h-1zM159 291h1v1h-1zM160 292h1v1h-1zM161 293h1v1h-1zM162 293h1v1h-1zM163 294h1v1h-1zM164 295h1v1h-1zM165 296h1v1h-1zM166 296h1v1h-1zM167 297h1v1h-1zM168 298h1v1h-1zM169 298h1v1h-1zM170 299h1v1h-1zM171 299h1v1h-1zM172 300h1v1h-1zM173 300h1v1h-1zM174 300h1v1h-1zM175 301h1v1h-1zM176 301h1v1h-1zM177 302h1v1h-1zM178 302h1v1h-1zM179 302h1v1h-1zM180 303h1v1h-1zM181 303h1v1h-1zM182 303h1v1h-1zM183 303h1v1h-1zM184 303h1v1h-1zM185 303h1v1h-1zM186 302h1v1h-1zM187 302h1v1h-1zM188 302h1v1h-1zM189 302h1v1h-1zM190 302h1v1h-1zM191 301h1v1h-1zM192 301h1v1h-1zM193 301h1v1h-1zM194 301h1v1h-1zM195 300h1v1h-1zM196 300h1v1h-1zM197 300h1v1h-1zM198 299h1v1h-1zM199 299h1v1h-1zM200 299h1v1h-1zM201 298h1v1h-1zM202 298h1v1h-1zM203 297h1v1h-1zM204 297h1v1h-1zM205 296h1v1h-1zM206 296h1v1h-1zM207 295h1v1h-1zM208 294h1v1h-1zM209 293h1v1h-1zM210 292h1v1h-1zM211 291h1v1h-1zM212 291h1v1h-1zM213 290h1v1h-1zM214 289h1v1h-1zM215 288h1v1h-1zM216 287h1v1h-1zM217 287h1v1h-1zM218 286h1v1h-1zM219 285h1v1h-1zM220 284h1v1h-1zM221 283h1v1h-1zM222 282h1v1h-1zM223 281h1v1h-1zM224 280h1v1h-1zM225 280h1v1h-1zM226 279h1v1h-1zM227 278h1v1h-1zM228 277h1v1h-1zM229 276h1v1h-1zM230 275h1v1h-1zM231 275h1v1h-1zM232 274h1v1h-1zM233 274h1v1h-1zM234 274h1v1h-1zM235 274h1v1h-1zM236 274h1v1h-1zM237 274h1v1h-1zM238 274h1v1h-1zM239 274h1v1h-1zM240 274h1v1h-1zM241 274h1v1h-1zM242 274h1v1h-1zM243 274h1v1h-1zM244 274h1v1h-1zM245 274h1v1h-1zM246 274h1v1h-1zM247 274h1v1h-1zM248 274h1v1h-1zM249 274h1v1h-1zM250 275h1v1h-1zM251 275h1v1h-1zM252 276h1v1h-1zM253 276h1v1h-1zM254 277h1v1h-1zM255 278h1v1h-1zM256 279h1v1h-1zM257 279h1v1h-1zM258 280h1v1h-1zM259 281h1v1h-1zM260 281h1v1h-1zM261 282h1v1h-1zM262 282h1v1h-1zM263 283h1v1h-1zM264 283h1v1h-1zM265 283h1v1h-1zM266 284h1v1h-1zM267 284h1v1h-1zM268 285h1v1h-1zM269 285h1v1h-1zM270 286h1v1h-1zM271 286h1v1h-1zM272 286h1v1h-1zM273 287h1v1h-1zM274 287h1v1h-1zM275 288h1v1h-1zM276 288h1v1h-1zM277 289h1v1h-1zM278 289h1v1h-1zM279 289h1v1h-1zM280 290h1v1h-1zM281 290h1v1h-1zM282 291h1v1h-1zM283 291h1v1h-1zM284 292h1v1h-1zM285 292h1v1h-1zM286 292h1v1h-1zM287 293h1v1h-1zM288 293h1v1h-1zM289 294h1v1h-1zM290 294h1v1h-1zM291 295h1v1h-1zM292 295h1v1h-1zM293 296h1v1h-1zM294 297h1v1h-1zM295 298h1v1h-1zM296 299h1v1h-1zM297 300h1v1h-1zM298 301h1v1h-1zM299 301h1v1h-1zM300 302h1v1h-1zM301 303h1v1h-1zM302 304h1v1h-1zM303 305h1v1h-1zM304 306h1v1h-1zM305 307h1v1h-1zM306 308h1v1h-1zM307 309h1v1h-1zM308 310h1v1h-1zM309 311h1v1h-1zM310 312h1v1h-1zM311 313h1v2h-1zM312 315h1v1h-1zM313 316h1v2h-1zM314 318h1v1h-1zM315 319h1v2h-1zM316 321h1v1h-1zM317 322h1v2h-1zM318 324h1v1h-1zM319 325h1v2h-1zM320 327h1v1h-1zM321 328h1v2h-1zM322 330h1v1h-1zM323 331h1v1h-1zM324 332h1v2h-1zM325 334h1v1h-1zM326 335h1v2h-1zM327 337h1v1h-1zM328 338h1v2h-1zM329 340h1v1h-1zM330 341h1v2h-1zM331 343h1v1h-1zM332 344h1v2h-1zM333 346h1v1h-1zM334 347h1v1h-1zM335 348h1v1h-1zM336 349h1v1h-1zM337 350h1v1h-1zM338 351h1v1h-1zM339 352h1v2h-1zM340 354h1v1h-1zM341 355h1v1h-1zM342 356h1v1h-1zM343 357h1v1h-1zM344 358h1v2h-1zM345 360h1v1h-1zM346 360h1v1h-1zM347 361h1v1h-1zM348 362h1v1h-1zM349 363h1v1h-1zM350 364h1v1h-1zM351 365h1v1h-1zM352 366h1v1h-1zM353 367h1v1h-1zM354 368h1v1h-1zM355 369h1v1h-1zM356 370h1v1h-1zM357 371h1v1h-1zM358 372h1v1h-1zM359 373h1v1h-1zM360 374h1v1h-1zM361 374h1v1h-1zM362 375h1v1h-1zM363 375h1v1h-1zM364 376h1v1h-1zM365 376h1v1h-1zM366 377h1v1h-1zM367 378h1v1h-1zM368 379h1v1h-1zM369 380h1v1h-1zM370 381h1v1h-1zM371 382h1v1h-1zM372 383h1v1h-1zM373 384h1v1h-1zM374 385h1v1h-1zM375 386h1v1h-1zM376 387h1v1h-1zM377 388h1v1h-1zM378 389h1v1h-1zM379 390h1v1h-1zM380 391h1v1h-1zM381 392h1v1h-1zM382 392h1v1h-1zM383 393h1v1h-1zM384 394h1v1h-1zM385 394h1v1h-1zM386 394h1v1h-1zM387 395h1v1h-1zM388 396h1v1h-1zM389 396h1v1h-1zM390 396h1v1h-1zM391 397h1v1h-1zM392 398h1v1h-1zM393 398h1v1h-1zM394 399h1v1h-1zM395 399h1v1h-1zM396 400h1v1h-1zM397 400h1v1h-1zM398 401h1v1h-1zM399 402h1v1h-1zM400 402h1v1h-1zM401 403h1v1h-1zM402 403h1v1h-1zM403 404h1v1h-1zM404 405h1v1h-1zM405 405h1v1h-1zM406 405h1v1h-1zM407 405h1v1h-1zM408 405h1v1h-1zM409 405h1v1h-1zM410 405h1v1h-1zM411 405h1v1h-1zM412 405h1v1h-1zM413 405h1v1h-1zM414 405h1v1h-1zM415 405h1v1h-1zM416 405h1v1h-1zM417 405h1v1h-1zM418 405h1v1h-1zM419 405h1v1h-1zM420 405h1v1h-1zM421 404h1v1h-1zM422 404h1v1h-1zM423 404h1v1h-1zM424 403h1v1h-1zM425 403h1v1h-1zM426 403h1v1h-1zM427 402h1v1h-1zM428 401h1v1h-1zM429 401h1v1h-1zM430 401h1v1h-1zM431 401h1v1h-1zM432 400h1v1h-1zM433 400h1v1h-1zM434 400h1v1h-1zM435 400h1v1h-1zM436 399h1v1h-1zM437 399h1v1h-1zM438 399h1v1h-1zM439 399h1v1h-1zM440 398h1v1h-1zM441 398h1v1h-1zM442 398h1v1h-1zM443 397h1v1h-1zM444 397h1v1h-1zM445 396h1v1h-1zM446 396h1v1h-1zM447 396h1v1h-1zM448 395h1v1h-1zM449 395h1v1h-1zM450 395h1v1h-1zM451 394h1v1h-1zM452 394h1v1h-1zM453 394h1v1h-1zM454 393h1v1h-1zM455 393h1v1h-1zM456 393h1v1h-1zM457 392h1v1h-1zM458 392h1v1h-1zM459 392h1v1h-1zM460 391h1v1h-1zM461 391h1v1h-1zM462 391h1v1h-1zM463 391h1v1h-1zM464 390h1v1h-1zM465 390h1v1h-1zM466 390h1v1h-1zM467 389h1v1h-1zM468 389h1v1h-1zM469 389h1v1h-1zM470 389h1v1h-1zM471 388h1v1h-1zM472 388h1v1h-1zM473 388h1v1h-1zM474 387h1v1h-1zM475 387h1v1h-1zM476 387h1v1h-1zM477 387h1v1h-1zM478 386h1v1h-1zM479 385h1v1h-1zM480 384h1v1h-1zM481 384h1v1h-1zM482 383h1v1h-1zM483 382h1v1h-1zM484 381h1v1h-1zM485 380h1v1h-1zM486 379h1v1h-1zM487 379h1v1h-1zM488 378h1v1h-1zM489 377h1v1h-1zM490 376h1v1h-1zM491 375h1v1h-1zM492 375h1v1h-1zM493 374h1v1h-1zM494 374h1v1h-1zM495 373h1v1h-1zM496 373h1v1h-1zM497 372h1v1h-1zM498 372h1v1h-1zM499 371h1v1h-1zM500 371h1v1h-1zM501 370h1v1h-1zM502 369h1v1h-1zM503 368h1v1h-1zM504 367h1v1h-1zM505 366h1v1h-1zM506 365h1v1h-1zM507 364h1v1h-1zM508 363h1v1h-1zM509 363h1v1h-1zM510 362h1v1h-1zM511 361h1v1h-1zM512 360h1v1h-1zM513 359h1v1h-1zM514 358h1v1h-1zM515 358h1v1h-1zM516 357h1v1h-1zM517 356h1v1h-1zM518 355h1v1h-1zM519 354h1v1h-1zM520 354h1v1h-1zM521 353h1v1h-1zM522 352h1v1h-1zM523 351h1v1h-1zM524 351h1v1h-1zM525 350h1v1h-1zM526 349h1v1h-1zM527 348h1v1h-1zM528 348h1v1h-1zM529 347h1v1h-1zM530 347h1v1h-1zM531 346h1v1h-1zM532 346h1v1h-1zM533 346h1v1h-1zM534 345h1v1h-1zM535 344h1v1h-1zM536 343h1v1h-1zM537 342h1v1h-1zM538 341h1v1h-1zM539 340h1v1h-1zM540 339h1v1h-1zM541 338h1v1h-1zM542 337h1v1h-1zM543 336h1v1h-1zM544 335h1v1h-1zM545 334h1v1h-1zM546 333h1v2h-1zM547 332h1v1h-1zM548 331h1v1h-1zM549 330h1v1h-1zM550 329h1v1h-1zM551 328h1v1h-1zM552 327h1v1h-1zM553 326h1v1h-1zM554 325h1v1h-1zM555 324h1v1h-1zM556 323h1v1h-1zM557 322h1v1h-1zM558 321h1v1h-1zM559 319h1v2h-1zM560 317h1v2h-1zM561 315h1v2h-1zM562 313h1v2h-1zM563 312h1v1h-1zM564 310h1v2h-1zM565 308h1v2h-1zM566 306h1v2h-1zM567 305h1v1h-1zM568 303h1v2h-1zM569 302h1v1h-1zM570 300h1v2h-1zM571 298h1v2h-1zM572 297h1v1h-1zM573 295h1v2h-1zM574 294h1v1h-1zM575 292h1v2h-1zM576 290h1v2h-1zM577 288h1v2h-1zM578 286h1v2h-1zM579 283h1v3h-1zM580 282h1v1h-1zM581 280h1v2h-1zM582 279h1v1h-1zM583 277h1v2h-1zM584 275h1v2h-1zM585 274h1v1h-1zM586 272h1v2h-1zM587 270h1v2h-1zM588 269h1v1h-1zM589 267h1v2h-1zM590 266h1v1h-1zM591 264h1v2h-1zM592 262h1v2h-1zM593 261h1v1h-1zM594 259h1v2h-1zM595 258h1v1h-1zM596 256h1v2h-1zM597 254h1v2h-1zM598 253h1v1h-1zM599 251h1v2h-1zM600 250h1v1h-1zM601 248h1v2h-1zM602 247h1v1h-1zM603 245h1v2h-1zM604 244h1v1h-1zM605 242h1v2h-1zM606 240h1v2h-1zM607 239h1v1h-1zM608 237h1v2h-1zM609 236h1v1h-1zM610 234h1v2h-1zM611 233h1v1h-1zM612 231h1v2h-1zM613 230h1v1h-1zM614 229h1v1h-1zM615 227h1v2h-1zM616 226h1v1h-1zM617 224h1v2h-1zM618 223h1v1h-1zM619 222h1v1h-1zM620 220h1v2h-1zM621 219h1v1h-1zM622 217h1v2h-1zM623 216h1v1h-1zM624 215h1v1h-1zM625 214h1v1h-1zM626 213h1v1h-1zM627 211h1v2h-1zM628 210h1v1h-1zM629 209h1v1h-1zM630 208h1v1h-1zM631 207h1v1h-1zM632 206h1v1h-1zM633 205h1v1h-1zM634 203h1v2h-1zM635 202h1v1h-1zM636 201h1v2h-1zM637 200h1v1h-1zM638 199h1v1h-1zM639 198h1v1h-1zM640 197h1v1h-1zM641 196h1v1h-1zM642 195h1v1h-1zM643 194h1v1h-1zM644 193h1v1h-1zM645 192h1v1h-1zM646 191h1v1h-1zM647 190h1v1h-1zM648 189h1v1h-1zM649 188h1v1h-1zM650 187h1v1h-1zM651 186h1v1h-1zM652 185h1v1h-1zM653 184h1v1h-1zM654 183h1v1h-1zM655 182h1v1h-1zM656 181h1v1h-1zM657 180h1v1h-1zM658 180h1v1h-1zM659 179h1v1h-1zM660 178h1v1h-1zM661 177h1v1h-1zM662 176h1v1h-1zM663 175h1v1h-1zM664 175h1v1h-1zM665 174h1v1h-1zM666 174h1v1h-1zM667 173h1v1h-1zM668 173h1v1h-1zM669 173h1v1h-1zM670 173h1v1h-1zM671 173h1v1h-1zM672 173h1v1h-1zM673 173h1v1h-1zM674 173h1v1h-1zM675 173h1v1h-1zM676 173h1v1h-1zM677 173h1v1h-1zM678 173h1v1h-1zM679 173h1v1h-1zM680 173h1v1h-1zM681 173h1v1h-1zM682 173h1v1h-1zM683 173h1v1h-1zM684 173h1v1h-1zM685 173h1v1h-1zM686 173h1v1h-1zM687 173h1v1h-1zM688 173h1v1h-1zM689 172h1v1h-1zM690 172h1v1h-1zM691 172h1v1h-1zM692 172h1v1h-1zM693 171h1v1h-1zM694 171h1v1h-1zM695 171h1v1h-1zM696 171h1v1h-1zM697 170h1v1h-1zM698 170h1v1h-1zM699 170h1v1h-1zM700 170h1v1h-1zM701 169h1v1h-1zM702 169h1v1h-1zM703 170h1v1h-1zM704 170h1v1h-1zM705 170h1v1h-1zM706 170h1v1h-1zM707 170h1v1h-1zM708 170h1v1h-1zM709 170h1v1h-1zM710 171h1v1h-1zM711 171h1v1h-1zM712 171h1v1h-1zM713 171h1v1h-1zM714 171h1v1h-1zM715 172h1v1h-1zM716 172h1v1h-1zM717 172h1v1h-1zM718 172h1v1h-1zM719 173h1v1h-1zM720 173h1v1h-1zM721 173h1v1h-1zM722 173h1v1h-1zM723 174h1v1h-1zM724 174h1v1h-1zM725 174h1v1h-1zM726 175h1v1h-1zM727 175h1v1h-1zM728 176h1v1h-1zM729 176h1v1h-1zM730 177h1v1h-1zM731 177h1v1h-1zM732 178h1v1h-1zM733 178h1v1h-1zM734 178h1v1h-1zM735 179h1v1h-1zM736 179h1v1h-1zM737 180h1v1h-1zM738 180h1v1h-1zM739 180h1v1h-1zM740 180h1v1h-1zM741 181h1v1h-1zM742 181h1v1h-1zM743 182h1v1h-1zM744 182h1v1h-1zM745 182h1v1h-1zM746 182h1v1h-1zM747 183h1v1h-1zM748 183h1v1h-1zM749 184h1v1h-1zM750 184h1v1h-1zM751 184h1v1h-1zM752 184h1v1h-1zM753 185h1v1h-1zM754 185h1v1h-1zM755 186h1v1h-1zM756 186h1v1h-1zM757 186h1v1h-1zM758 187h1v1h-1zM759 187h1v1h-1zM760 188h1v1h-1zM761 188h1v1h-1zM762 189h1v1h-1zM763 189h1v1h-1zM764 190h1v1h-1zM765 190h1v1h-1zM766 191h1v1h-1zM767 192h1v1h-1zM768 193h1v1h-1zM769 193h1v1h-1zM770 194h1v1h-1zM771 195h1v1h-1zM772 196h1v1h-1zM773 196h1v1h-1zM774 197h1v1h-1zM775 198h1v1h-1zM776 198h1v1h-1zM777 199h1v1h-1zM778 199h1v1h-1zM779 200h1v1h-1zM780 200h1v1h-1zM781 201h1v1h-1zM782 202h1v1h-1zM783 202h1v1h-1zM784 203h1v1h-1zM785 203h1v1h-1zM786 204h1v1h-1zM787 204h1v1h-1zM788 205h1v1h-1zM789 205h1v1h-1zM790 206h1v1h-1zM791 206h1v1h-1zM792 207h1v1h-1zM793 207h1v1h-1zM794 208h1v1h-1zM795 208h1v1h-1zM796 209h1v1h-1zM797 210h1v1h-1zM798 210h1v1h-1zM799 211h1v1h-1zM800 212h1v1h-1zM801 213h1v1h-1zM802 214h1v1h-1zM803 214h1v1h-1zM804 215h1v1h-1zM805 216h1v1h-1zM806 217h1v1h-1zM807 217h1v1h-1zM808 218h1v1h-1zM809 219h1v1h-1zM810 220h1v1h-1zM811 221h1v1h-1zM812 221h1v1h-1zM813 222h1v1h-1zM814 223h1v1h-1zM815 224h1v1h-1zM816 225h1v1h-1zM817 225h1v1h-1zM818 226h1v1h-1zM819 227h1v1h-1zM820 228h1v1h-1zM821 229h1v1h-1zM822 229h1v1h-1zM823 230h1v1h-1zM824 231h1v1h-1zM825 232h1v1h-1zM826 233h1v1h-1zM827 233h1v1h-1zM828 234h1v1h-1zM829 235h1v1h-1zM830 236h1v1h-1zM831 237h1v1h-1zM832 238h1v1h-1zM833 239h1v1h-1zM834 240h1v1h-1zM835 241h1v1h-1zM836 242h1v1h-1zM837 243h1v1h-1zM838 244h1v1h-1zM839 245h1v1h-1zM840 246h1v1h-1zM841 247h1v1h-1zM842 247h1v1h-1zM843 248h1v1h-1zM844 249h1v1h-1zM845 250h1v1h-1zM846 251h1v1h-1zM847 252h1v1h-1zM848 252h1v1h-1zM849 253h1v1h-1zM850 254h1v1h-1zM851 255h1v1h-1zM852 256h1v1h-1zM853 256h1v1h-1zM854 257h1v1h-1zM855 257h1v1h-1zM856 258h1v1h-1zM857 258h1v1h-1zM858 258h1v1h-1zM859 259h1v1h-1zM860 259h1v1h-1zM861 260h1v1h-1zM862 260h1v1h-1zM863 261h1v1h-1zM864 262h1v1h-1zM865 262h1v1h-1zM866 263h1v1h-1zM867 264h1v1h-1zM868 264h1v1h-1zM869 265h1v1h-1zM870 266h1v1h-1zM871 266h1v1h-1zM872 267h1v1h-1zM873 267h1v1h-1zM874 268h1v1h-1zM875 269h1v1h-1zM876 269h1v1h-1zM877 270h1v1h-1zM878 271h1v1h-1zM879 271h1v1h-1zM880 272h1v1h-1zM881 272h1v1h-1zM882 273h1v1h-1zM883 274h1v1h-1zM884 274h1v1h-1zM885 275h1v1h-1zM886 275h1v1h-1zM887 276h1v1h-1zM888 276h1v1h-1zM889 277h1v1h-1zM890 277h1v1h-1zM891 277h1v1h-1zM892 278h1v1h-1zM893 278h1v1h-1zM894 279h1v1h-1zM895 279h1v1h-1zM896 279h1v1h-1zM897 279h1v1h-1zM898 280h1v1h-1zM899 280h1v1h-1zM900 280h1v1h-1zM901 280h1v1h-1zM902 280h1v1h-1zM903 280h1v1h-1zM904 281h1v1h-1zM905 281h1v1h-1zM906 281h1v1h-1zM907 281h1v1h-1zM908 281h1v1h-1zM909 281h1v1h-1zM910 281h1v1h-1zM911 281h1v1h-1zM912 281h1v1h-1zM913 281h1v1h-1zM914 281h1v1h-1zM915 281h1v1h-1zM916 281h1v1h-1zM917 281h1v1h-1zM918 281h1v1h-1zM919 281h1v1h-1zM920 281h1v1h-1zM921 281h1v1h-1zM922 281h1v1h-1zM923 281h1v1h-1zM924 281h1v1h-1zM925 281h1v1h-1zM926 281h1v1h-1zM927 281h1v1h-1zM928 281h1v1h-1zM929 282h1v1h-1zM930 283h1v1h-1zM931 283h1v1h-1zM932 283h1v1h-1zM933 283h1v1h-1zM934 283h1v1h-1zM935 283h1v1h-1zM936 283h1v1h-1zM937 283h1v1h-1zM938 283h1v1h-1zM939 283h1v1h-1zM940 283h1v1h-1zM941 282h1v1h-1zM942 282h1v1h-1zM943 282h1v1h-1zM944 282h1v1h-1zM945 282h1v1h-1zM946 282h1v1h-1zM947 282h1v1h-1zM948 282h1v1h-1zM949 282h1v1h-1zM950 281h1v1h-1zM951 281h1v1h-1zM952 281h1v1h-1zM953 281h1v1h-1zM954 281h1v1h-1zM955 281h1v1h-1zM956 281h1v1h-1zM957 281h1v1h-1zM958 281h1v1h-1zM959 281h1v1h-1zM960 281h1v1h-1zM961 281h1v1h-1zM962 281h1v1h-1zM963 281h1v1h-1zM964 281h1v1h-1zM965 281h1v1h-1zM966 281h1v1h-1zM967 281h1v1h-1zM968 281h1v1h-1zM969 281h1v1h-1zM970 280h1v1h-1zM971 280h1v1h-1zM972 280h1v1h-1zM973 280h1v1h-1zM974 280h1v1h-1zM975 280h1v1h-1zM976 280h1v1h-1zM977 279h1v1h-1zM978 279h1v1h-1zM979 279h1v1h-1zM980 279h1v1h-1zM981 279h1v1h-1zM982 279h1v1h-1zM983 279h1v1h-1zM984 279h1v1h-1zM985 279h1v1h-1zM986 279h1v1h-1zM987 278h1v1h-1zM988 278h1v1h-1zM989 278h1v1h-1zM990 278h1v1h-1zM991 278h1v1h-1zM992 278h1v1h-1zM993 278h1v1h-1zM994 278h1v1h-1zM995 278h1v1h-1zM996 277h1v1h-1zM997 277h1v1h-1zM998 278h1v1h-1zM999 278h1v1h-1zM1000 278h1v1h-1zM1001 279h1v1h-1zM1002 279h1v1h-1zM1003 279h1v1h-1zM1004 280h1v1h-1zM1005 280h1v1h-1zM1006 281h1v1h-1zM1007 281h1v1h-1zM1008 282h1v1h-1zM1009 282h1v1h-1zM1010 282h1v1h-1zM1011 283h1v1h-1zM1012 283h1v1h-1zM1013 284h1v1h-1zM1014 284h1v1h-1zM1015 285h1v1h-1zM1016 285h1v1h-1zM1017 285h1v1h-1zM1018 286h1v1h-1zM1019 287h1v1h-1zM1020 287h1v1h-1zM1021 288h1v1h-1zM1022 288h1v1h-1zM1023 289h1v1h-1zM1024 290h1v1h-1zM1025 290h1v1h-1zM1026 291h1v1h-1zM1027 291h1v1h-1zM1028 292h1v1h-1zM1029 293h1v1h-1zM1030 293h1v1h-1zM1031 294h1v1h-1zM1032 294h1v1h-1zM1033 295h1v1h-1zM1034 295h1v1h-1zM1035 296h1v1h-1zM1036 296h1v1h-1zM1037 297h1v1h-1zM1038 297h1v1h-1zM1039 298h1v1h-1zM1040 298h1v1h-1zM1041 299h1v1h-1zM1042 299h1v1h-1zM1043 300h1v1h-1zM1044 300h1v1h-1zM1045 301h1v1h-1zM1046 301h1v1h-1zM1047 302h1v1h-1zM1048 302h1v1h-1zM1049 303h1v1h-1zM1050 303h1v1h-1zM1051 304h1v1h-1zM1052 304h1v1h-1zM1053 304h1v1h-1zM1054 305h1v1h-1zM1055 305h1v1h-1zM1056 305h1v1h-1zM1057 305h1v1h-1zM1058 305h1v1h-1zM1059 305h1v1h-1zM1060 305h1v1h-1zM1061 305h1v1h-1zM1062 305h1v1h-1zM1063 305h1v1h-1zM1064 306h1v1h-1zM1065 306h1v1h-1zM1066 306h1v1h-1zM1067 306h1v1h-1zM1068 307h1v1h-1zM1069 307h1v1h-1zM1070 307h1v1h-1zM1071 307h1v1h-1zM1072 308h1v1h-1zM1073 308h1v1h-1zM1074 308h1v1h-1zM1075 309h1v1h-1zM1076 309h1v1h-1zM1077 309h1v1h-1zM1078 310h1v1h-1zM1079 310h1v1h-1zM1080 310h1v1h-1zM1081 311h1v1h-1zM1082 311h1v1h-1zM1083 311h1v1h-1zM1084 312h1v1h-1zM1085 312h1v1h-1zM1086 312h1v1h-1zM1087 313h1v1h-1zM1088 313h1v1h-1zM1089 313h1v1h-1zM1090 313h1v1h-1zM1091 314h1v1h-1zM1092 314h1v1h-1zM1093 315h1v1h-1zM1094 315h1v1h-1zM1095 316h1v1h-1zM1096 316h1v1h-1zM1097 317h1v1h-1zM1098 317h1v1h-1zM1099 318h1v1h-1zM1100 318h1v1h-1zM1101 319h1v1h-1zM1102 319h1v1h-1zM1103 320h1v1h-1zM1104 320h1v1h-1zM1105 321h1v1h-1zM1106 321h1v1h-1zM1107 321h1v1h-1zM1108 322h1v1h-1zM1109 322h1v1h-1zM1110 322h1v1h-1zM1111 323h1v1h-1zM1112 323h1v1h-1zM1113 323h1v1h-1zM1114 324h1v1h-1zM1115 324h1v1h-1zM1116 324h1v1h-1z"/><g fill="#ffffff"><rect x="1122" y="139" width="2" height="1"/><rect x="1122" y="175" width="2" height="1"/><rect x="1122" y="211" width="2" height="1"/><rect x="1122" y="247" width="2" height="1"/><rect x="1122" y="283" width="2" height="1"/><rect x="1122" y="319" width="2" height="1"/><rect x="1122" y="355" width="2" height="1"/><rect x="1122" y="391" width="2" height="1"/><rect x="1122" y="427" width="2" height="1"/><rect x="1122" y="463" width="2" height="1"/><rect x="13" y="472" width="1" height="3"/><rect x="77" y="472" width="1" height="3"/><rect x="141" y="472" width="1" height="3"/><rect x="205" y="472" width="1" height="3"/><rect x="269" y="472" width="1" height="3"/><rect x="333" y="472" width="1" height="3"/><rect x="397" y="472" width="1" height="3"/><rect x="461" y="472" width="1" height="3"/><rect x="525" y="472" width="1" height="3"/><rect x="589" y="472" width="1" height="3"/><rect x="653" y="472" width="1" height="3"/><rect x="717" y="472" width="1" height="3"/><rect x="781" y="472" width="1" height="3"/><rect x="845" y="472" width="1" height="3"/><rect x="909" y="472" width="1" height="3"/><rect x="973" y="472" width="1" height="3"/><rect x="1037" y="472" width="1" height="3"/><rect x="1101" y="472" width="1" height="3"/></g></svg>
<svg width="1178" height="713" style="left:0;top:0"><path d="M893 111h9.5l-4.75 4.8z" fill="#8a9bb4"/><path d="M13 464.5v6.5h6.5z" fill="#7f8fae"/><path d="M16 121l3.6-4.2 3.6 4.2z" fill="#fff"/><circle cx="1110.7" cy="120.3" r="5.2" fill="none" stroke="#fff" stroke-width="1.1"/><circle cx="1108.8" cy="118.8" r=".8" fill="#fff"/><circle cx="1112.6" cy="118.8" r=".8" fill="#fff"/><path d="M1107.8 121.4a3.2 3.2 0 0 0 5.8 0" fill="none" stroke="#fff" stroke-width="1"/></svg>
<span class="t " style="left:28.40px;top:111.50px;font-size:10.4px;line-height:14px;color:#fff;transform:scaleX(0.8816);">USDJPYm,M1</span>
<span class="t " style="left:94.60px;top:111.50px;font-size:10.4px;line-height:14px;color:#fff;transform:scaleX(0.8512);">147.359</span>
<span class="t " style="left:130.70px;top:111.50px;font-size:10.4px;line-height:14px;color:#fff;transform:scaleX(0.8565);">147.360</span>
<span class="t " style="left:167.00px;top:111.50px;font-size:10.4px;line-height:14px;color:#fff;transform:scaleX(0.8379);">147.349</span>
<span class="t " style="left:203.00px;top:111.50px;font-size:10.4px;line-height:14px;color:#fff;transform:scaleX(0.8406);">147.356</span>
<span class="t " style="left:1034.80px;top:112.70px;font-size:10.4px;line-height:14px;color:#fff;transform:scaleX(0.9528);">Instant Copy AI</span>
<span class="t " style="left:1127.50px;top:133.10px;font-size:10.4px;line-height:14px;color:#fff;transform:scaleX(0.8672);">148.240</span>
<span class="t " style="left:1127.50px;top:169.10px;font-size:10.4px;line-height:14px;color:#fff;transform:scaleX(0.8672);">148.215</span>
<span class="t " style="left:1127.50px;top:205.10px;font-size:10.4px;line-height:14px;color:#fff;transform:scaleX(0.8672);">148.190</span>
<span class="t " style="left:1127.50px;top:241.10px;font-size:10.4px;line-height:14px;color:#fff;transform:scaleX(0.8672);">148.165</span>
<span class="t " style="left:1127.50px;top:277.10px;font-size:10.4px;line-height:14px;color:#fff;transform:scaleX(0.8672);">148.140</span>
<span class="t " style="left:1127.50px;top:313.10px;font-size:10.4px;line-height:14px;color:#fff;transform:scaleX(0.8853);">148.115</span>
<span class="t " style="left:1127.50px;top:349.10px;font-size:10.4px;line-height:14px;color:#fff;transform:scaleX(0.8672);">148.090</span>
<span class="t " style="left:1127.50px;top:385.10px;font-size:10.4px;line-height:14px;color:#fff;transform:scaleX(0.8672);">148.065</span>
<span class="t " style="left:1127.50px;top:421.10px;font-size:10.4px;line-height:14px;color:#fff;transform:scaleX(0.8672);">148.040</span>
<span class="t " style="left:1127.50px;top:457.10px;font-size:10.4px;line-height:14px;color:#fff;transform:scaleX(0.8672);">148.015</span>
<span class="t " style="left:12.50px;top:474.00px;font-size:10.4px;line-height:14px;color:#fff;transform:scaleX(0.8611);">29 Jan 2024</span>
<span class="t " style="left:76.00px;top:474.00px;font-size:10.4px;line-height:14px;color:#fff;transform:scaleX(0.8779);">29 Jan 01:02</span>
<span class="t " style="left:140.00px;top:474.00px;font-size:10.4px;line-height:14px;color:#fff;transform:scaleX(0.8779);">29 Jan 01:10</span>
<span class="t " style="left:204.00px;top:474.00px;font-size:10.4px;line-height:14px;color:#fff;transform:scaleX(0.8779);">29 Jan 01:18</span>
<span class="t " style="left:268.00px;top:474.00px;font-size:10.4px;line-height:14px;color:#fff;transform:scaleX(0.8779);">29 Jan 01:26</span>
<span class="t " style="left:332.00px;top:474.00px;font-size:10.4px;line-height:14px;color:#fff;transform:scaleX(0.8779);">29 Jan 01:34</span>
<span class="t " style="left:396.00px;top:474.00px;font-size:10.4px;line-height:14px;color:#fff;transform:scaleX(0.8779);">29 Jan 01:42</span>
<span class="t " style="left:460.00px;top:474.00px;font-size:10.4px;line-height:14px;color:#fff;transform:scaleX(0.8779);">29 Jan 01:50</span>
<span class="t " style="left:524.00px;top:474.00px;font-size:10.4px;line-height:14px;color:#fff;transform:scaleX(0.8779);">29 Jan 01:58</span>
<span class="t " style="left:588.00px;top:474.00px;font-size:10.4px;line-height:14px;color:#fff;transform:scaleX(0.8779);">29 Jan 02:06</span>
<span class="t " style="left:652.00px;top:474.00px;font-size:10.4px;line-height:14px;color:#fff;transform:scaleX(0.8779);">29 Jan 02:14</span>
<span class="t " style="left:716.00px;top:474.00px;font-size:10.4px;line-height:14px;color:#fff;transform:scaleX(0.8779);">29 Jan 02:22</span>
<span class="t " style="left:780.00px;top:474.00px;font-size:10.4px;line-height:14px;color:#fff;transform:scaleX(0.8779);">29 Jan 02:30</span>
<span class="t " style="left:844.00px;top:474.00px;font-size:10.4px;line-height:14px;color:#fff;transform:scaleX(0.8779);">29 Jan 02:38</span>
<span class="t " style="left:908.00px;top:474.00px;font-size:10.4px;line-height:14px;color:#fff;transform:scaleX(0.8779);">29 Jan 02:46</span>
<span class="t " style="left:972.00px;top:474.00px;font-size:10.4px;line-height:14px;color:#fff;transform:scaleX(0.8779);">29 Jan 02:54</span>
<span class="t " style="left:1036.00px;top:474.00px;font-size:10.4px;line-height:14px;color:#fff;transform:scaleX(0.8779);">29 Jan 03:02</span>
<span class="t " style="left:1100.00px;top:474.00px;font-size:10.4px;line-height:14px;color:#fff;transform:scaleX(0.8779);">29 Jan 03:10</span>
<span class="t " style="left:223.20px;top:441.10px;font-size:9.8px;line-height:13px;color:#8c8c8c;transform:scaleX(0.9574);">Status</span>
<span class="t " style="left:225.00px;top:450.70px;font-size:17px;line-height:22px;color:#00e1ff;transform:scaleX(0.9339);">stopped</span>
<div class="r" style="left:14px;top:126.5px;width:190px;height:59.5px;background:#000;"></div>
<div class="r" style="left:16.2px;top:128.3px;width:43.4px;height:55.5px;background:linear-gradient(180deg,#ee4c4c 0,#de3636 20px,#c61e1e 40px,#b00c0c 55.5px);"></div>
<div class="r" style="left:16.2px;top:149.7px;width:92.6px;height:34.1px;background:linear-gradient(180deg,#dc3434 0,#c41c1c 18px,#b00c0c 34px);"></div>
<div class="r" style="left:159.6px;top:128.3px;width:43.6px;height:55.5px;background:linear-gradient(180deg,#ee4c4c 0,#de3636 20px,#c61e1e 40px,#b00c0c 55.5px);"></div>
<div class="r" style="left:111.2px;top:149.7px;width:92px;height:34.1px;background:linear-gradient(180deg,#dc3434 0,#c41c1c 18px,#b00c0c 34px);"></div>
<div class="r" style="left:19.6px;top:150px;width:36.5px;height:1px;background:#f08c8c;"></div>
<div class="r" style="left:163px;top:150px;width:36.2px;height:1px;background:#f08c8c;"></div>
<div class="r" style="left:61.8px;top:128.3px;width:95.2px;height:19.5px;background:#e6e6e6;box-shadow:inset 0 0 0 1px #9c9c9c;"></div>
<div class="r" style="left:81px;top:129.3px;width:56.5px;height:17.5px;background:#ffffff;border-left:1px solid #aab0c0;border-right:1px solid #aab0c0;box-sizing:border-box;"></div>
<svg width="200" height="60" style="left:0;top:100"><path d="M68.900 36h5.600l-2.800 3z" fill="#000"/><path d="M143.600 38.800h5.600l-2.800-3z" fill="#000"/></svg>
<span class="t " style="left:25.20px;top:130.50px;font-size:12.5px;line-height:16px;color:#fff;transform:scaleX(0.7456);">SELL</span>
<span class="t " style="left:169.50px;top:130.50px;font-size:12.5px;line-height:16px;color:#fff;transform:scaleX(0.8092);">BUY</span>
<span class="t " style="left:113.60px;top:130.30px;font-size:12px;line-height:16px;color:#1c2b5e;transform:scaleX(0.8435);">1.00</span>
<span class="t " style="left:32.90px;top:165.20px;font-size:12px;line-height:16px;color:#fff;transform:scaleX(0.9489);font-weight:bold;">147</span>
<span class="t " style="left:57.60px;top:147.30px;font-size:31px;line-height:40px;color:#fff;transform:scaleX(0.8816);">35</span>
<span class="t " style="left:93.60px;top:151.10px;font-size:11.5px;line-height:15px;color:#fff;font-weight:bold;">6</span>
<span class="t " style="left:127.00px;top:165.20px;font-size:12px;line-height:16px;color:#fff;transform:scaleX(0.9889);font-weight:bold;">147</span>
<span class="t " style="left:152.50px;top:147.30px;font-size:31px;line-height:40px;color:#fff;transform:scaleX(0.9106);">36</span>
<span class="t " style="left:188.80px;top:151.10px;font-size:11.5px;line-height:15px;color:#fff;font-weight:bold;">7</span>
<div class="r" style="left:0px;top:492px;width:1169px;height:2px;background:#d4d4d4;"></div>
<div class="r" style="left:0px;top:494px;width:1169px;height:3.5px;background:#f0f0f0;"></div>
<div class="r" style="left:0px;top:497.5px;width:1165.5px;height:165px;background:#ffffff;"></div>
<div class="r" style="left:0px;top:497px;width:1165.5px;height:1px;background:#d4d4d4;"></div>
<div class="r" style="left:1165.5px;top:497px;width:1px;height:166px;background:#dadada;"></div>
<div class="r" style="left:149px;top:498px;width:1px;height:24px;background:#e5e5e5;"></div>
<div class="r" style="left:240px;top:498px;width:1px;height:24px;background:#e5e5e5;"></div>
<div class="r" style="left:310px;top:498px;width:1px;height:24px;background:#e5e5e5;"></div>
<div class="r" style="left:401px;top:498px;width:1px;height:24px;background:#e5e5e5;"></div>
<div class="r" style="left:502px;top:498px;width:1px;height:24px;background:#e5e5e5;"></div>
<div class="r" style="left:603px;top:498px;width:1px;height:24px;background:#e5e5e5;"></div>
<div class="r" style="left:704px;top:498px;width:1px;height:24px;background:#e5e5e5;"></div>
<div class="r" style="left:805px;top:498px;width:1px;height:24px;background:#e5e5e5;"></div>
<div class="r" style="left:906px;top:498px;width:1px;height:24px;background:#e5e5e5;"></div>
<div class="r" style="left:1007px;top:498px;width:1px;height:24px;background:#e5e5e5;"></div>
<span class="t " style="left:119.30px;top:501.60px;font-size:12px;line-height:16px;color:#000;transform:scaleX(0.9420);">Time</span>
<span class="t " style="left:211.50px;top:501.60px;font-size:12px;line-height:16px;color:#000;transform:scaleX(0.9110);">Type</span>
<span class="t " style="left:285.20px;top:501.60px;font-size:12px;line-height:16px;color:#000;transform:scaleX(0.8482);">Size</span>
<span class="t " style="left:355.90px;top:501.60px;font-size:12px;line-height:16px;color:#000;transform:scaleX(0.9921);">Symbol</span>
<span class="t " style="left:469.50px;top:501.60px;font-size:12px;line-height:16px;color:#000;transform:scaleX(1.0241);">Price</span>
<span class="t " style="left:573.50px;top:501.60px;font-size:12px;line-height:16px;color:#000;transform:scaleX(0.9765);">S / L</span>
<span class="t " style="left:674.50px;top:501.60px;font-size:12px;line-height:16px;color:#000;transform:scaleX(0.9674);">T / P</span>
<span class="t " style="left:772.50px;top:501.60px;font-size:12px;line-height:16px;color:#000;transform:scaleX(1.0241);">Price</span>
<span class="t " style="left:834.70px;top:501.60px;font-size:12px;line-height:16px;color:#000;">Commission</span>
<span class="t " style="left:974.30px;top:501.60px;font-size:12px;line-height:16px;color:#000;transform:scaleX(0.9228);">Swap</span>
<span class="t " style="left:1130.30px;top:501.60px;font-size:12px;line-height:16px;color:#000;transform:scaleX(1.0747);">Profit</span>
<div class="r" style="left:0px;top:522px;width:1165.5px;height:19.5px;background:#c8c8c8;"></div>
<span class="t " style="left:-12.12px;top:523.80px;font-size:12px;line-height:16px;color:#000;transform:scaleX(0.9846);font-weight:bold;">Equity: 2 060.93  Free margin: 2 060.93</span>
<span class="t " style="left:1136.40px;top:523.80px;font-size:12px;line-height:16px;color:#000;transform:scaleX(1.0361);font-weight:bold;">0.00</span>
<div class="r" style="left:0px;top:662px;width:1165.5px;height:1.2px;background:#1a1a1a;"></div>
<div class="r" style="left:0px;top:663.2px;width:1169px;height:24px;background:#f0f0f0;"></div>
<span class="t " style="left:-33.96px;top:664.40px;font-size:12px;line-height:16px;color:#555;transform:scaleX(1.0182);">Account History</span>
<span class="t " style="left:72.30px;top:664.40px;font-size:12px;line-height:16px;color:#555;transform:scaleX(0.9498);">News</span>
<span class="t " style="left:133.00px;top:664.40px;font-size:12px;line-height:16px;color:#555;transform:scaleX(0.9780);">Alerts</span>
<span class="t " style="left:183.40px;top:664.40px;font-size:12px;line-height:16px;color:#555;transform:scaleX(1.0060);">Mailbox</span>
<span class="t " style="left:263.00px;top:664.40px;font-size:12px;line-height:16px;color:#555;transform:scaleX(1.0125);">Company</span>
<span class="t " style="left:335.00px;top:664.40px;font-size:12px;line-height:16px;color:#555;">Market</span>
<span class="t " style="left:392.00px;top:664.40px;font-size:12px;line-height:16px;color:#555;transform:scaleX(0.9812);">Articles</span>
<span class="t " style="left:451.00px;top:664.40px;font-size:12px;line-height:16px;color:#555;transform:scaleX(0.9263);">Code Base</span>
<span class="t " style="left:526.00px;top:664.40px;font-size:12px;line-height:16px;color:#555;transform:scaleX(0.9341);">Experts</span>
<span class="t " style="left:583.70px;top:664.40px;font-size:12px;line-height:16px;color:#555;transform:scaleX(0.9655);">Journal</span>
<span class="t " style="left:103.00px;top:670.30px;font-size:9.5px;line-height:12px;color:#e0142c;transform:scaleX(0.9463);font-weight:bold;">94</span>
<span class="t " style="left:228.20px;top:670.30px;font-size:9.5px;line-height:12px;color:#e0142c;transform:scaleX(0.9337);font-weight:bold;">207</span>
<div class="r" style="left:62.0px;top:665.5px;width:1px;height:13.5px;background:#555;"></div>
<div class="r" style="left:122.8px;top:665.5px;width:1px;height:13.5px;background:#555;"></div>
<div class="r" style="left:173.0px;top:665.5px;width:1px;height:13.5px;background:#555;"></div>
<div class="r" style="left:252.8px;top:665.5px;width:1px;height:13.5px;background:#555;"></div>
<div class="r" style="left:324.8px;top:665.5px;width:1px;height:13.5px;background:#555;"></div>
<div class="r" style="left:382.2px;top:665.5px;width:1px;height:13.5px;background:#555;"></div>
<div class="r" style="left:440.9px;top:665.5px;width:1px;height:13.5px;background:#555;"></div>
<div class="r" style="left:515.6px;top:665.5px;width:1px;height:13.5px;background:#555;"></div>
<div class="r" style="left:574.0px;top:665.5px;width:1px;height:13.5px;background:#555;"></div>
<div class="r" style="left:632.1px;top:665.5px;width:1px;height:13.5px;background:#555;"></div>
<div class="r" style="left:0px;top:687px;width:1169px;height:1px;background:#c6c6c6;"></div>
<div class="r" style="left:0px;top:688px;width:1169px;height:1px;background:#fafafa;"></div>
<div class="r" style="left:456.2px;top:692px;width:1px;height:18px;background:#a8a8a8;"></div>
<div class="r" style="left:572.0px;top:692px;width:1px;height:18px;background:#a8a8a8;"></div>
<div class="r" style="left:673.9px;top:692px;width:1px;height:18px;background:#a8a8a8;"></div>
<div class="r" style="left:744.8px;top:692px;width:1px;height:18px;background:#a8a8a8;"></div>
<div class="r" style="left:815.9px;top:692px;width:1px;height:18px;background:#a8a8a8;"></div>
<div class="r" style="left:883.8px;top:692px;width:1px;height:18px;background:#a8a8a8;"></div>
<div class="r" style="left:953.4px;top:692px;width:1px;height:18px;background:#a8a8a8;"></div>
<div class="r" style="left:1019.5px;top:692px;width:1px;height:18px;background:#a8a8a8;"></div>
<span class="t " style="left:462.00px;top:693.00px;font-size:12px;line-height:16px;color:#000;transform:scaleX(0.9863);">Default</span>
<span class="t " style="left:1053.00px;top:693.00px;font-size:12px;line-height:16px;color:#000;transform:scaleX(0.9654);">65/2 kb</span>
<svg width="1178" height="713" style="left:0;top:0" shape-rendering="crispEdges"><rect x="1026" y="694" width="2" height="8.0" fill="#7a8a1c"/><rect x="1026" y="702.0" width="2" height="4.0" fill="#123a5c"/><rect x="1029" y="694" width="2" height="6.9" fill="#7a8a1c"/><rect x="1029" y="700.9" width="2" height="5.1" fill="#123a5c"/><rect x="1032" y="694" width="2" height="5.8" fill="#7a8a1c"/><rect x="1032" y="699.8" width="2" height="6.2" fill="#123a5c"/><rect x="1035" y="694" width="2" height="4.7" fill="#7a8a1c"/><rect x="1035" y="698.7" width="2" height="7.3" fill="#123a5c"/><rect x="1038" y="694" width="2" height="3.6" fill="#7a8a1c"/><rect x="1038" y="697.6" width="2" height="8.4" fill="#123a5c"/><rect x="1041" y="694" width="2" height="2.5" fill="#7a8a1c"/><rect x="1041" y="696.5" width="2" height="9.5" fill="#123a5c"/><rect x="1044" y="694" width="2" height="1.4" fill="#7a8a1c"/><rect x="1044" y="695.4" width="2" height="10.6" fill="#123a5c"/><rect x="1047" y="694" width="2" height="0.3" fill="#7a8a1c"/><rect x="1047" y="694.3" width="2" height="11.7" fill="#123a5c"/></svg>
<svg width="1178" height="713" style="left:0;top:0"><g stroke="#b4b4b4" stroke-width="1.2"><path d="M1156 710.5l12-12M1160 710.5l8-8M1164 710.5l4-4"/></g></svg>
</body></html>
